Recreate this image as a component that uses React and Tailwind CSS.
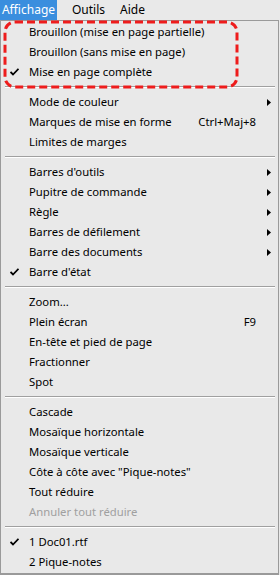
const groups = [
  [
    { label: 'Brouillon (mise en page partielle)' },
    { label: 'Brouillon (sans mise en page)' },
    { label: 'Mise en page complète', checked: true },
  ],
  [
    { label: 'Mode de couleur', sub: true },
    { label: 'Marques de mise en forme', shortcut: 'Ctrl+Maj+8' },
    { label: 'Limites de marges' },
  ],
  [
    { label: "Barres d'outils", sub: true },
    { label: 'Pupitre de commande', sub: true },
    { label: 'Règle', sub: true },
    { label: 'Barres de défilement', sub: true },
    { label: 'Barre des documents', sub: true },
    { label: "Barre d'état", checked: true },
  ],
  [
    { label: 'Zoom...' },
    { label: 'Plein écran', shortcut: 'F9' },
    { label: 'En-tête et pied de page' },
    { label: 'Fractionner' },
    { label: 'Spot' },
  ],
  [
    { label: 'Cascade' },
    { label: 'Mosaïque horizontale' },
    { label: 'Mosaïque verticale' },
    { label: 'Côte à côte avec "Pique-notes"' },
    { label: 'Tout réduire' },
    { label: 'Annuler tout réduire', disabled: true },
  ],
  [
    { label: '1 Doc01.rtf', checked: true },
    { label: '2 Pique-notes' },
  ],
]

function Check() {
  return (
    <svg width="9" height="8" viewBox="0 0 9 8" className="block">
      <path d="M0.5 4 L3 6.5 L8.5 0.8" fill="none" stroke="#000" strokeWidth="1.8" />
    </svg>
  )
}

function Arrow() {
  return (
    <svg width="4" height="7" viewBox="0 0 4 7" className="block">
      <path d="M0 0 L4 3.5 L0 7 Z" fill="#000" />
    </svg>
  )
}

function Item({ label, checked, sub, shortcut, disabled }) {
  return (
    <div className={`flex items-center h-5 ${disabled ? 'text-[#a0a0a0]' : 'text-black'}`}>
      <div className="w-[28px] pl-[9px] shrink-0">{checked && <Check />}</div>
      <span className="flex-1 whitespace-nowrap">{label}</span>
      {shortcut && <span className="whitespace-nowrap">{shortcut}</span>}
      <div className="w-[22px] shrink-0 flex justify-start pl-[11px]">{sub && <Arrow />}</div>
    </div>
  )
}

export default function App() {
  return (
    <div className="w-[280px] h-[575px] bg-[#e9e9e9] text-[11.3px] leading-5 font-['Noto_Sans',sans-serif] overflow-hidden relative">
      {/* menu bar */}
      <div className="flex h-5 items-center text-[12px]">
        <div className="h-5 w-[57px] text-center bg-[#3a8ede] text-white">Affichage</div>
        <div className="ml-[15px]">Outils</div>
        <div className="ml-[15px]">Aide</div>
      </div>

      {/* dropdown */}
      <div className="w-[279px] border border-[#9a9a9a] border-b-2 pt-px pb-px">
        {groups.map((g, i) => (
          <div key={i}>
            {i > 0 && (
              <div className="h-[10px] flex items-center pl-[4px] pr-[3px]">
                <div className="w-full border-t border-[#a0a0a0] border-b border-b-white" />
              </div>
            )}
            {g.map((it) => (
              <Item key={it.label} {...it} />
            ))}
          </div>
        ))}
      </div>

      {/* red dashed highlight */}
      <svg className="absolute left-0 top-0 pointer-events-none" width="280" height="100">
        <rect x="5" y="22" width="232" height="65" rx="10" fill="none" stroke="#ee1c1c" strokeWidth="3" strokeDasharray="8 4" />
      </svg>
    </div>
  )
}
